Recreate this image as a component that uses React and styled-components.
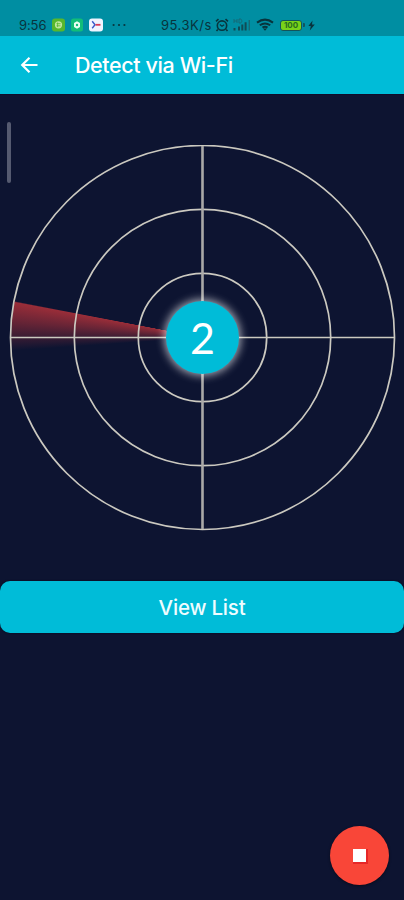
import styled, { createGlobalStyle } from "styled-components";

const GlobalStyle = createGlobalStyle`
  * {
    box-sizing: border-box;
  }
  body {
    margin: 0;
    background-color: #0d1431;
    font-family: Inter, "Noto Sans", sans-serif;
  }
`;

const Screen = styled.div`
  position: relative;
  display: flex;
  flex-direction: column;
  height: 900px;
  overflow: hidden;
  background-color: #0d1431;
`;

const StatusBar = styled.div`
  display: flex;
  align-items: center;
  height: 36px;
  padding: 14px 0 0 19px;
  background-color: #008ea2;
  color: #08343d;
`;

const StatusText = styled.span`
  width: ${(props) => props.$width}px;
  font-size: 13px;
  line-height: 22px;
  letter-spacing: ${(props) => props.$spacing || 0}px;
  white-space: nowrap;
`;

const AppBadges = styled.div`
  display: flex;
  align-items: center;
  gap: 6px;
  margin: 0 9px 0 3px;
`;

const StatusIcon = styled.svg`
  display: block;
  flex: none;
  margin-left: ${(props) => props.$left || 0}px;
`;

const Battery = styled.div`
  display: flex;
  align-items: center;
  justify-content: center;
  width: 22px;
  height: 11px;
  margin-left: 6px;
  border: 1.5px solid #14545c;
  border-radius: 3px;
  background-color: #79d219;
  color: #286d20;
  font-size: 8px;
  font-weight: 700;
  line-height: 8px;
`;

const BatteryTip = styled.div`
  width: 2px;
  height: 4px;
  margin-left: 1px;
  border-radius: 0 1px 1px 0;
  background-color: #14545c;
`;

const Toolbar = styled.header`
  display: flex;
  align-items: center;
  height: 58px;
  padding-left: 20px;
  background-color: #00bcd8;
  color: #fff;
`;

const BackButton = styled.button`
  display: flex;
  width: 55px;
  padding: 0;
  border: none;
  background: none;
  color: inherit;
`;

const Title = styled.h1`
  margin: 0;
  font-size: 21.5px;
  font-weight: 500;
  line-height: 28px;
  letter-spacing: -0.4px;
`;

const RadarArea = styled.main`
  display: flex;
  height: 487px;
  padding: 50px 0 0 9px;
  border-top: 1px solid #100c2a;
`;

const Radar = styled.div`
  display: grid;
  place-items: center;
  width: 387px;
  height: 387px;

  > * {
    grid-area: 1 / 1;
  }
`;

const Sweep = styled.div`
  width: 383px;
  height: 383px;
  margin-bottom: 2px;
  border-radius: 50%;
  background: conic-gradient(
    transparent 266deg,
    rgba(180, 50, 58, 0.26) 270deg,
    rgba(180, 50, 58, 0.55) 275deg,
    rgba(180, 50, 58, 0.84) 280.6deg,
    transparent 281deg
  );
`;

const Grid = styled.svg`
  display: block;
`;

const Hub = styled.div`
  display: flex;
  align-items: center;
  justify-content: center;
  width: 73px;
  height: 73px;
  margin-bottom: 2px;
  border-radius: 50%;
  background-color: #00bcd8;
  box-shadow: 0 0 8px 2px rgba(255, 255, 255, 0.62);
  color: #fff;
  font-family: Lato, sans-serif;
  font-size: 43px;
  line-height: 50px;
`;

const ListButton = styled.button`
  height: 52px;
  padding: 1px 0 0;
  border: none;
  border-radius: 10px;
  background-color: #00bcd8;
  box-shadow: 0 0 2px #050818;
  color: #effcff;
  font-family: Inter, sans-serif;
  font-size: 20.5px;
  font-weight: 450;
  letter-spacing: -0.2px;
`;

const ScrollThumb = styled.div`
  position: absolute;
  top: 122px;
  left: 7px;
  width: 4px;
  height: 61px;
  border-radius: 2px;
  background-color: #555a70;
`;

const StopButton = styled.button`
  position: absolute;
  right: 15px;
  bottom: 15px;
  display: flex;
  align-items: center;
  justify-content: center;
  width: 59px;
  height: 59px;
  padding: 0;
  border: none;
  border-radius: 50%;
  background-color: #f94638;
  box-shadow: 0 1px 3px rgba(0, 0, 0, 0.45);
`;

const StopMark = styled.span`
  width: 13px;
  height: 13px;
  margin-bottom: 1px;
  background-color: #fff;
  box-shadow: 1px 1px 0 1px #e62728;
`;

const NotificationIcons = () => (
  <AppBadges>
    <StatusIcon width="13" height="14" viewBox="0 0 13 14">
      <rect y="0.5" width="13" height="13" rx="3" fill="#57b72c" />
      <circle cx="6.5" cy="6.8" r="3.6" fill="#c2e8a0" />
      <path d="M4.5 5.7h4M4.5 7.8h4M5.6 4.5v4.6" stroke="#57b72c" strokeWidth="0.8" />
    </StatusIcon>
    <StatusIcon width="12" height="14" viewBox="0 0 12 14">
      <rect y="0.5" width="12" height="13" rx="2.5" fill="#12bd79" />
      <path d="M6 3.3 9 5v4L6 10.8 3 9V5z" fill="#e8fff3" />
      <circle cx="6" cy="7" r="1.2" fill="#12bd79" />
    </StatusIcon>
    <StatusIcon width="14" height="14" viewBox="0 0 14 14">
      <rect y="0.5" width="14" height="13" rx="3" fill="#f0f4ff" />
      <path d="M3.2 3.3 6 6.8 3.2 10.2" fill="none" stroke="#3858c9" strokeWidth="1.4" />
      <path d="M6.5 6.8h5" stroke="#d93855" strokeWidth="1.8" />
    </StatusIcon>
  </AppBadges>
);

const AlarmIcon = () => (
  <StatusIcon $left={1} width="14" height="14" viewBox="0 0 14 14" fill="none" stroke="#08343d" strokeWidth="1.6">
    <circle cx="7" cy="7.6" r="4.7" />
    <path d="M1 3.4 3.5 1.2M13 3.4l-2.5-2.2M2.8 11.6l-1.3 1.5M11.2 11.6l1.3 1.5" />
    <path d="M4.8 6.5 7 8.3l2.2-1.5" strokeWidth="1.1" />
  </StatusIcon>
);

const SignalIcon = () => (
  <StatusIcon $left={4} width="19" height="14" viewBox="0 0 19 14">
    <path d="M1 1v4M4 1v4M1 3h3M6 1v4h1.2c2.2 0 2.2-4 0-4z" fill="none" stroke="#1b626c" strokeWidth="0.8" />
    <path d="M1.5 10v2.5M6 8.5v4M9.3 6.5v6M12.6 4.2v8.3" stroke="#104b55" strokeWidth="2" />
    <path d="M16.3 2v10.5" stroke="#176873" strokeWidth="1.4" />
  </StatusIcon>
);

const WifiIcon = () => (
  <StatusIcon $left={4} width="18" height="14" viewBox="0 0 18 14" fill="none" stroke="#08343d" strokeWidth="2">
    <path d="M1 4.6q8-6 16 0M3.8 7.3q5.2-3.8 10.4 0M6.5 9.6q2.5-1.8 5 0" />
    <path d="m7 10.5 2 2.3 2-2.3z" fill="#08343d" stroke="none" />
  </StatusIcon>
);

const RadarGrid = () => (
  <Grid width="387" height="387" viewBox="0 0 387 387" fill="none" stroke="#cbc9c0" strokeWidth="1.7">
    <circle cx="193.5" cy="192.5" r="192" />
    <circle cx="193.5" cy="192.5" r="128.2" />
    <circle cx="193.5" cy="192.5" r="64.2" />
    <path d="M1 192.5h385" />
    <path d="M193.5 1v383" stroke="#aaa9a8" strokeWidth="2.6" />
  </Grid>
);

const App = () => {
  const devices = 2;

  return (
    <Screen>
      <GlobalStyle />
      <StatusBar>
        <StatusText $width={30} $spacing={-0.1}>9:56</StatusText>
        <NotificationIcons />
        <StatusIcon width="14" height="4" viewBox="0 0 14 4" fill="#08343d">
          <circle cx="1.6" cy="2" r="1.1" />
          <circle cx="7" cy="2" r="1.1" />
          <circle cx="12.4" cy="2" r="1.1" />
        </StatusIcon>
        <StatusIcon width="35" height="1" />
        <StatusText $width={53} $spacing={0.5}>95.3K/s</StatusText>
        <AlarmIcon />
        <SignalIcon />
        <WifiIcon />
        <Battery>100</Battery>
        <BatteryTip />
        <StatusIcon $left={3} width="7" height="11" viewBox="0 0 7 11">
          <path d="M4.5 0.5 0.4 6h2.4L1.8 10.5 6.8 4.5H4z" fill="#08343d" />
        </StatusIcon>
      </StatusBar>
      <Toolbar>
        <BackButton aria-label="Back">
          <svg width="19" height="18" viewBox="0 0 19 18" fill="none" stroke="currentColor" strokeWidth="2.2">
            <path d="M17.5 9H2.5M9.5 1.7 2.2 9l7.3 7.3" />
          </svg>
        </BackButton>
        <Title>Detect via Wi-Fi</Title>
      </Toolbar>
      <RadarArea>
        <Radar>
          <Sweep />
          <RadarGrid />
          <Hub>{devices}</Hub>
        </Radar>
      </RadarArea>
      <ListButton>View List</ListButton>
      <ScrollThumb />
      <StopButton aria-label="Stop">
        <StopMark />
      </StopButton>
    </Screen>
  );
};

export default App;
